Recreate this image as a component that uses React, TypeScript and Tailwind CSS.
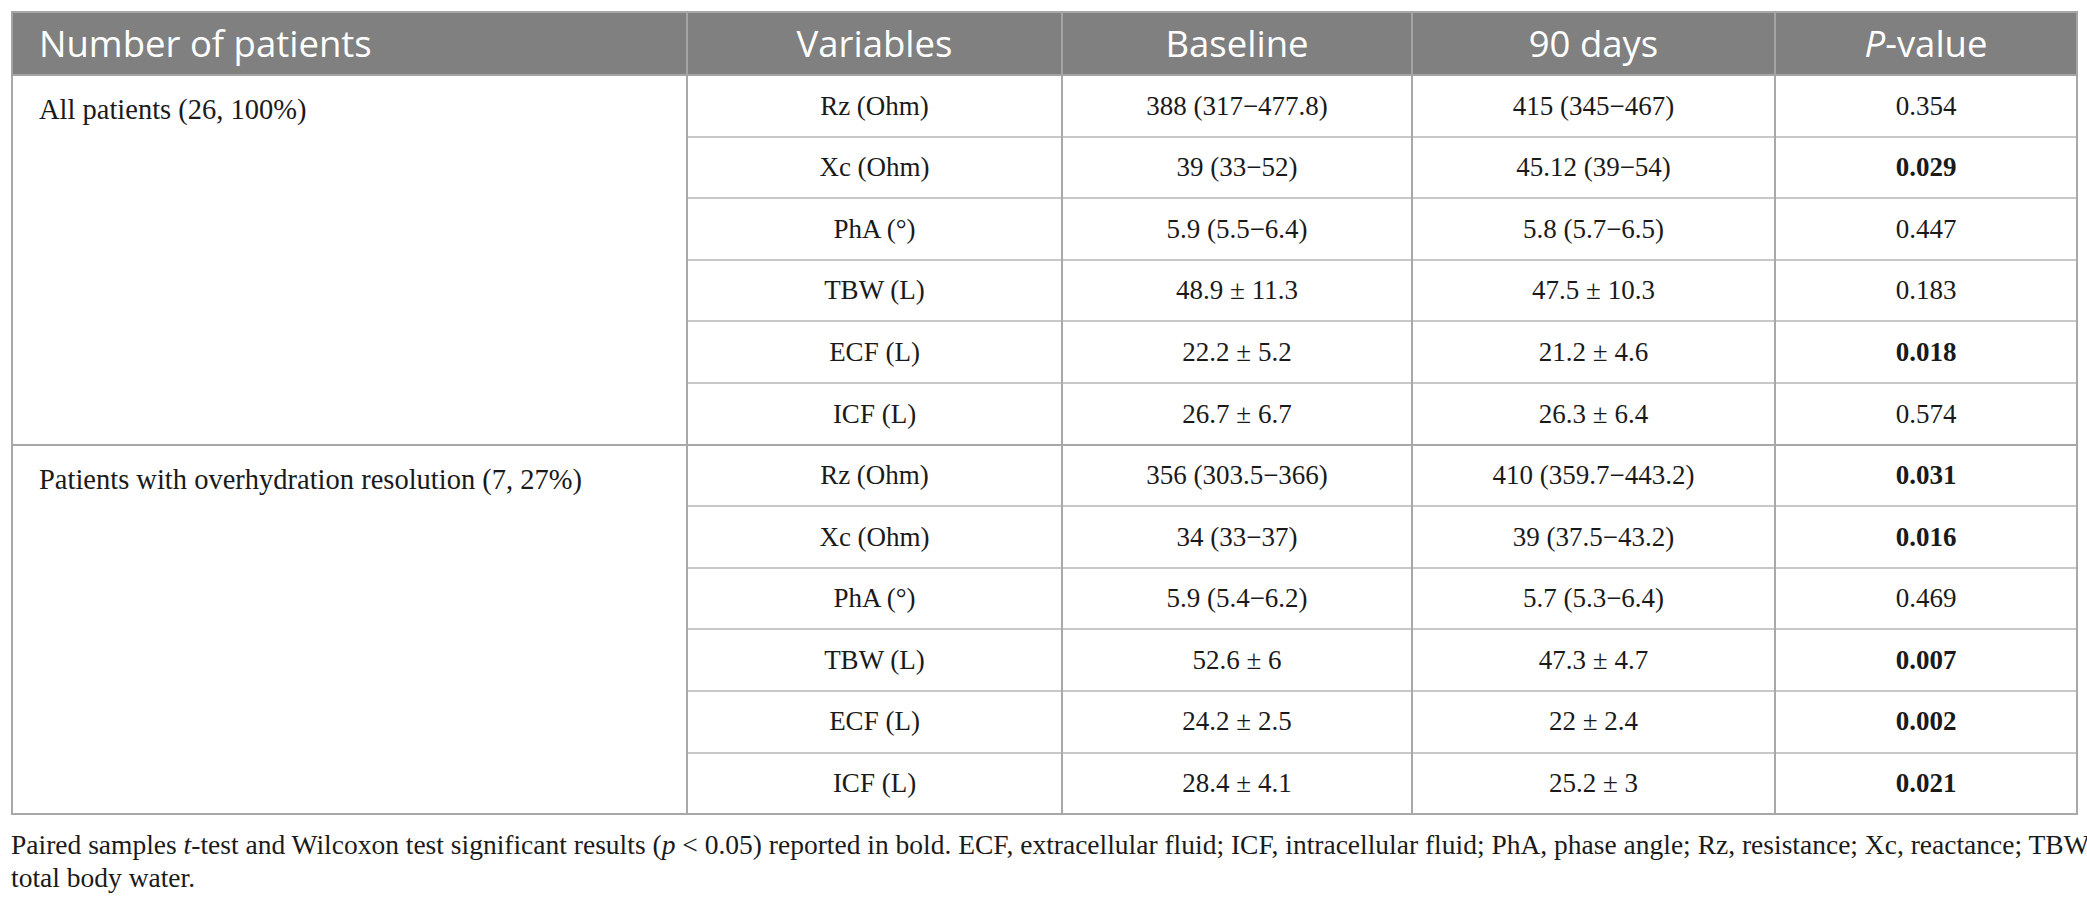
import React from "react";

type Row = {
  variable: string;
  baseline: string;
  days: string;
  p: string;
  bold?: boolean;
};

type Group = {
  label: string;
  rows: Row[];
};

const groups: Group[] = [
  {
    label: "All patients (26, 100%)",
    rows: [
      { variable: "Rz (Ohm)", baseline: "388 (317\u2212477.8)", days: "415 (345\u2212467)", p: "0.354" },
      { variable: "Xc (Ohm)", baseline: "39 (33\u221252)", days: "45.12 (39\u221254)", p: "0.029", bold: true },
      { variable: "PhA (\u00b0)", baseline: "5.9 (5.5\u22126.4)", days: "5.8 (5.7\u22126.5)", p: "0.447" },
      { variable: "TBW (L)", baseline: "48.9 \u00b1 11.3", days: "47.5 \u00b1 10.3", p: "0.183" },
      { variable: "ECF (L)", baseline: "22.2 \u00b1 5.2", days: "21.2 \u00b1 4.6", p: "0.018", bold: true },
      { variable: "ICF (L)", baseline: "26.7 \u00b1 6.7", days: "26.3 \u00b1 6.4", p: "0.574" },
    ],
  },
  {
    label: "Patients with overhydration resolution (7, 27%)",
    rows: [
      { variable: "Rz (Ohm)", baseline: "356 (303.5\u2212366)", days: "410 (359.7\u2212443.2)", p: "0.031", bold: true },
      { variable: "Xc (Ohm)", baseline: "34 (33\u221237)", days: "39 (37.5\u221243.2)", p: "0.016", bold: true },
      { variable: "PhA (\u00b0)", baseline: "5.9 (5.4\u22126.2)", days: "5.7 (5.3\u22126.4)", p: "0.469" },
      { variable: "TBW (L)", baseline: "52.6 \u00b1 6", days: "47.3 \u00b1 4.7", p: "0.007", bold: true },
      { variable: "ECF (L)", baseline: "24.2 \u00b1 2.5", days: "22 \u00b1 2.4", p: "0.002", bold: true },
      { variable: "ICF (L)", baseline: "28.4 \u00b1 4.1", days: "25.2 \u00b1 3", p: "0.021", bold: true },
    ],
  },
];

const serif = "font-['Liberation_Serif',serif]";
const cell = "border-x-2 border-x-[#a8a8a8] text-center align-middle text-[27px]";
const head = "border-x-2 border-b-2 border-[#a4a4a4] font-normal";

export default function App() {
  return (
    <div className={`min-h-[909px] w-[2087px] bg-white pl-[11px] pt-[11px] text-[#1a1a1a] ${serif}`}>
      <table className="w-[2065px] table-fixed border-collapse border-2 border-[#a8a8a8]">
        <colgroup>
          <col className="w-[675px]" />
          <col className="w-[375px]" />
          <col className="w-[350px]" />
          <col className="w-[363px]" />
          <col className="w-[302px]" />
        </colgroup>
        <thead>
          <tr className="h-[63px] bg-[#808080] font-['Open_Sans',sans-serif] text-[36.5px] leading-none text-white">
            <th className={`${head} pl-[26px] text-left`}>Number of patients</th>
            <th className={head}>Variables</th>
            <th className={head}>Baseline</th>
            <th className={head}>90 days</th>
            <th className={head}>
              <i>P</i>-value
            </th>
          </tr>
        </thead>
        {groups.map((g) => (
          <tbody key={g.label} className="border-b-2 border-[#a8a8a8]">
            {g.rows.map((r, i) => (
              <tr
                key={r.variable}
                className={`h-[61.6px] ${i < g.rows.length - 1 ? "border-b-2 border-b-[#c8c8c8]" : ""}`}
              >
                {i === 0 && (
                  <td
                    rowSpan={g.rows.length}
                    className="border-r-2 border-[#a8a8a8] pl-[26px] pt-[13px] text-left align-top text-[28.5px]"
                  >
                    {g.label}
                  </td>
                )}
                <td className={cell}>{r.variable}</td>
                <td className={cell}>{r.baseline}</td>
                <td className={cell}>{r.days}</td>
                <td className={`${cell} ${r.bold ? "font-bold" : ""}`}>{r.p}</td>
              </tr>
            ))}
          </tbody>
        ))}
      </table>
      <p className="mt-[13px] w-[2070px] text-[27.5px] leading-[33px]">
        <span className="whitespace-nowrap">
          Paired samples <i>t</i>-test and Wilcoxon test significant results (<i>p</i> &lt; 0.05) reported in bold.
          ECF, extracellular fluid; ICF, intracellular fluid; PhA, phase angle; Rz, resistance; Xc, reactance; TBW
        </span>
        <br />
        total body water.
      </p>
    </div>
  );
}
